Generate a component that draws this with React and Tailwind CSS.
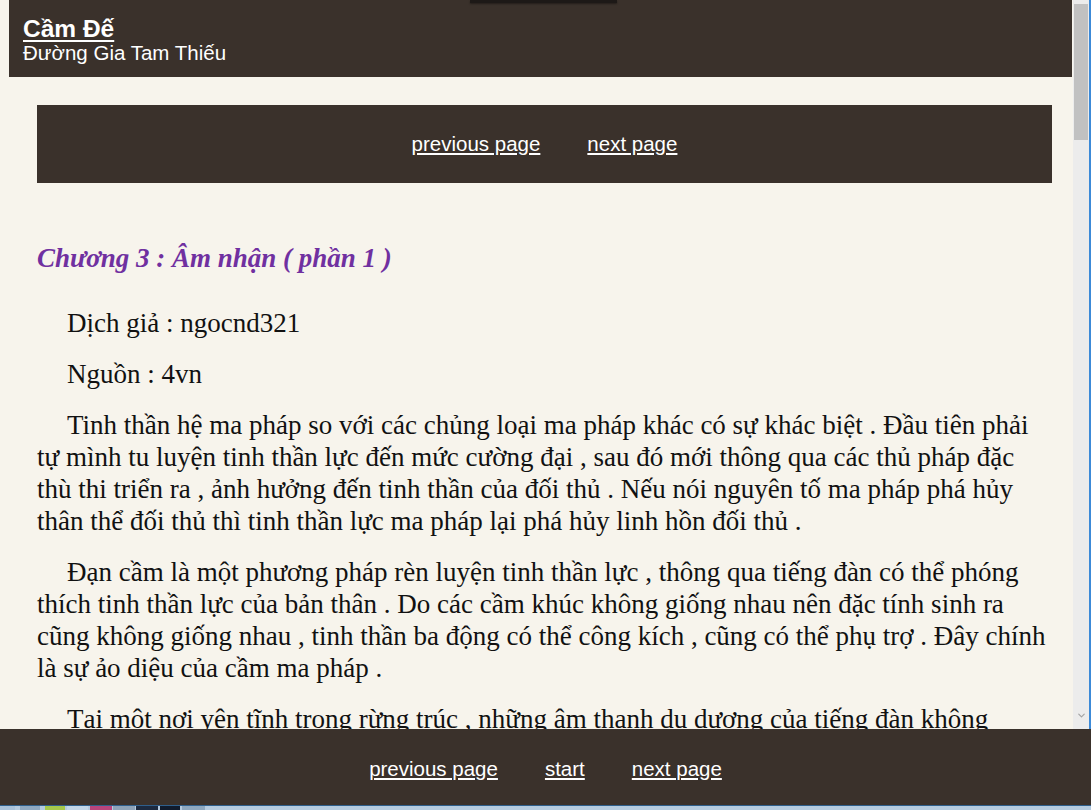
import { ChevronDown } from "lucide-react";

const paragraphs = [
  ["Dịch giả : ngocnd321"],
  ["Nguồn : 4vn"],
  [
    "Tinh thần hệ ma pháp so với các chủng loại ma pháp khác có sự khác biệt . Đầu tiên phải",
    "tự mình tu luyện tinh thần lực đến mức cường đại , sau đó mới thông qua các thủ pháp đặc",
    "thù thi triển ra , ảnh hưởng đến tinh thần của đối thủ . Nếu nói nguyên tố ma pháp phá hủy",
    "thân thể đối thủ thì tinh thần lực ma pháp lại phá hủy linh hồn đối thủ .",
  ],
  [
    "Đạn cầm là một phương pháp rèn luyện tinh thần lực , thông qua tiếng đàn có thể phóng",
    "thích tinh thần lực của bản thân . Do các cầm khúc không giống nhau nên đặc tính sinh ra",
    "cũng không giống nhau , tinh thần ba động có thể công kích , cũng có thể phụ trợ . Đây chính",
    "là sự ảo diệu của cầm ma pháp .",
  ],
  ["Tại một nơi yên tĩnh trong rừng trúc , những âm thanh du dương của tiếng đàn không"],
];

const sans = "font-['Liberation_Sans',Arial,sans-serif]";
const serif = "font-['Liberation_Serif','Times_New_Roman',serif]";

const PageLinks = ({ links }) => (
  <div className={`flex items-center justify-center gap-[47px] text-[20.5px] text-white ${sans}`}>
    {links.map((l) => (
      <a key={l} href="#" className="underline underline-offset-[2px]">
        {l}
      </a>
    ))}
  </div>
);

export default function App() {
  return (
    <div className="flex h-[810px] w-[1091px] flex-col overflow-hidden bg-[#f7f4ec]">
      <div className="flex min-h-0 flex-1">
        {/* Page */}
        <main className="relative min-w-0 flex-1 overflow-hidden">
          <div className="absolute left-[470px] top-0 h-[3px] w-[147px] bg-[#1d1917] shadow-[0_1px_2px_rgba(0,0,0,0.4)]" />

          <header className={`ml-[9px] mr-[1px] h-[77px] bg-[#3a312b] px-[14px] pt-[15px] text-white ${sans}`}>
            <a href="#" className="block w-fit text-[24.5px] font-bold leading-[27px] underline decoration-2 underline-offset-[3px]">
              Cầm Đế
            </a>
            <div className="text-[20.5px] leading-[22px]">Đường Gia Tam Thiếu</div>
          </header>

          <div className="pl-[37px] pr-[21px]">
            <nav className="mt-[28px] flex h-[78px] items-center justify-center bg-[#3a312b]">
              <PageLinks links={["previous page", "next page"]} />
            </nav>

            <h2 className={`mt-[60px] text-[27px] font-bold italic leading-[31px] text-[#7030a0] ${serif}`}>
              Chương 3 : Âm nhận ( phần 1 )
            </h2>

            <div className={`mt-[33px] flex flex-col gap-[19px] text-[27px] leading-[32px] text-[#111] ${serif}`}>
              {paragraphs.map((lines, i) => (
                <p key={i} className="whitespace-nowrap indent-[30px]">
                  {lines.map((line, j) => (
                    <span key={j}>
                      {j > 0 && <br />}
                      {line}
                    </span>
                  ))}
                </p>
              ))}
            </div>
          </div>
        </main>

        {/* Scrollbar */}
        <div className="flex w-[18px] flex-col border-r-2 border-r-[#3c8ad8] bg-[#ececec] pt-[4px]">
          <div className="ml-[1px] h-[136px] w-[14px] bg-[#c1c1c1]" />
          <div className="flex-1" />
          <div className="flex h-[22px] items-center justify-center pb-[6px] text-[#a3a3a3]">
            <ChevronDown size={11} strokeWidth={2.5} />
          </div>
        </div>
      </div>

      {/* Bottom page links */}
      <footer className="flex h-[76px] items-center justify-center bg-[#3a312b] pt-[4px]">
        <PageLinks links={["previous page", "start", "next page"]} />
      </footer>

      {/* Taskbar strip */}
      <div className="flex h-[5px] border-t border-t-[#2f5f8c] bg-[#b5cbe0]">
        <div className="w-[15px] bg-[#a9c2da]" />
        <div className="ml-[5px] w-[20px] bg-[#8fa9c2]" />
        <div className="ml-[5px] w-[20px] bg-[#a5c84b]" />
        <div className="ml-[2px] w-[21px] bg-[#c2d6e8]" />
        <div className="ml-[2px] w-[22px] bg-[#b9457c]" />
        <div className="ml-[1px] w-[22px] bg-[#8ea3b8]" />
        <div className="ml-[1px] w-[22px] bg-[#1c2a40]" />
        <div className="ml-[2px] w-[20px] bg-[#101b2d]" />
        <div className="ml-[2px] w-[23px] bg-[#8ea8c0]" />
      </div>
    </div>
  );
}
